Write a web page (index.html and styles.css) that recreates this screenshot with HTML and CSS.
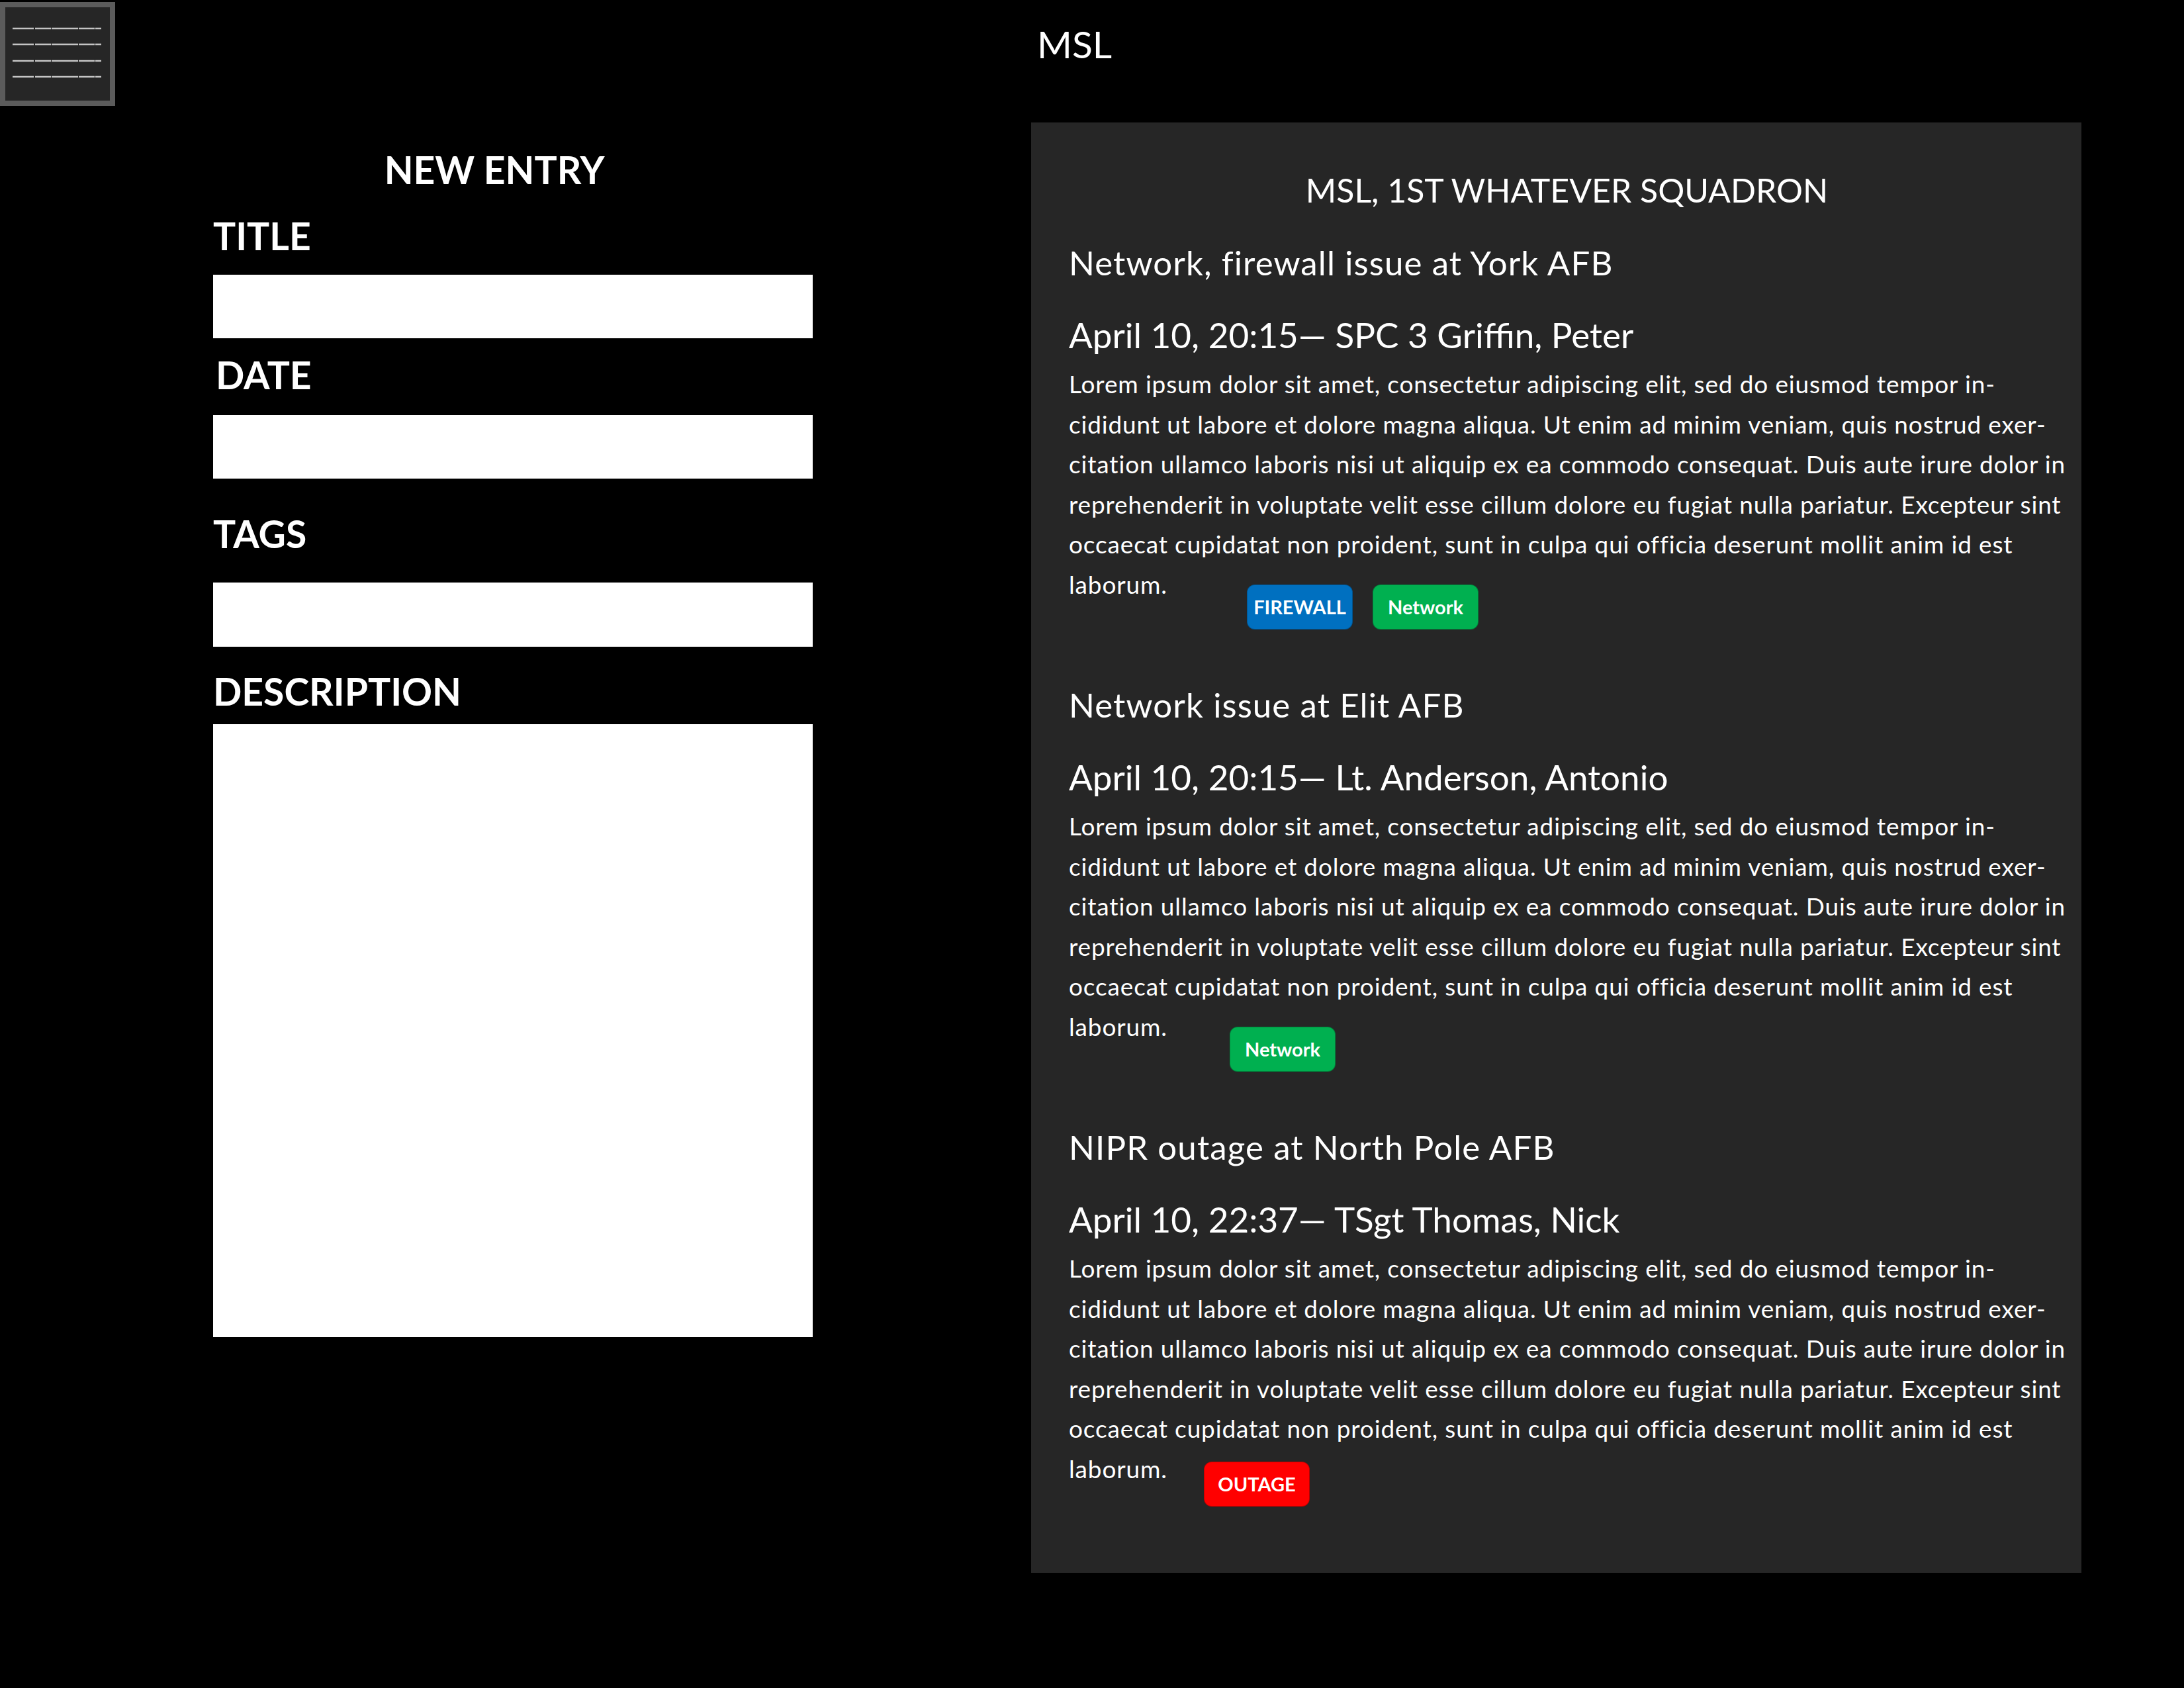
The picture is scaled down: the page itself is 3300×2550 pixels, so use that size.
FILE: index.html
```html
<!DOCTYPE html>
<html lang="en">
<head>
<meta charset="utf-8">
<title>MSL</title>
<link rel="stylesheet" href="styles.css">
</head>
<body>
<header class="topbar">
  <button class="menu-btn" type="button" aria-label="Menu">
    <svg class="menu-icon" width="158" height="141" viewBox="0 0 158 141">
      <g stroke="#c4c4c4" stroke-width="2.5" fill="none" stroke-dasharray="32 2 24 1 40 1 24 1 9 40">
        <path d="M11 32H145"/>
        <path d="M11 56H145"/>
        <path d="M11 81H145"/>
        <path d="M11 105H145"/>
      </g>
    </svg>
  </button>
  <h1 class="app-title">MSL</h1>
</header>

<main class="workspace">
  <section class="entry-form">
    <h2 class="form-heading">NEW ENTRY</h2>
    <label class="field-label label-title" for="f-title">TITLE</label>
    <input class="field-input input-title" id="f-title" type="text">
    <label class="field-label label-date" for="f-date">DATE</label>
    <input class="field-input input-date" id="f-date" type="text">
    <label class="field-label label-tags" for="f-tags">TAGS</label>
    <input class="field-input input-tags" id="f-tags" type="text">
    <label class="field-label label-desc" for="f-desc">DESCRIPTION</label>
    <textarea class="field-area" id="f-desc"></textarea>
  </section>

  <section class="log-panel">
    <h2 class="panel-heading">MSL, 1ST WHATEVER SQUADRON</h2>

    <article class="entry">
      <h3 class="entry-title">Network, firewall issue at York AFB</h3>
      <p class="entry-meta">April 10, 20:15— SPC 3 Griffin, Peter</p>
      <p class="entry-body">Lorem ipsum dolor sit amet, consectetur adipiscing elit, sed do eiusmod tempor in-<br>cididunt ut labore et dolore magna aliqua. Ut enim ad minim veniam, quis nostrud exer-<br>citation ullamco laboris nisi ut aliquip ex ea commodo consequat. Duis aute irure dolor in<br>reprehenderit in voluptate velit esse cillum dolore eu fugiat nulla pariatur. Excepteur sint<br>occaecat cupidatat non proident, sunt in culpa qui officia deserunt mollit anim id est</p>
      <div class="entry-last">
        <span class="last-word">laborum.</span>
        <div class="tag-list tags-one">
          <span class="tag tag-blue">FIREWALL</span>
          <span class="tag tag-green">Network</span>
        </div>
      </div>
    </article>

    <article class="entry">
      <h3 class="entry-title">Network issue at Elit AFB</h3>
      <p class="entry-meta">April 10, 20:15— Lt. Anderson, Antonio</p>
      <p class="entry-body">Lorem ipsum dolor sit amet, consectetur adipiscing elit, sed do eiusmod tempor in-<br>cididunt ut labore et dolore magna aliqua. Ut enim ad minim veniam, quis nostrud exer-<br>citation ullamco laboris nisi ut aliquip ex ea commodo consequat. Duis aute irure dolor in<br>reprehenderit in voluptate velit esse cillum dolore eu fugiat nulla pariatur. Excepteur sint<br>occaecat cupidatat non proident, sunt in culpa qui officia deserunt mollit anim id est</p>
      <div class="entry-last">
        <span class="last-word">laborum.</span>
        <div class="tag-list tags-two">
          <span class="tag tag-green">Network</span>
        </div>
      </div>
    </article>

    <article class="entry">
      <h3 class="entry-title">NIPR outage at North Pole AFB</h3>
      <p class="entry-meta">April 10, 22:37— TSgt Thomas, Nick</p>
      <p class="entry-body">Lorem ipsum dolor sit amet, consectetur adipiscing elit, sed do eiusmod tempor in-<br>cididunt ut labore et dolore magna aliqua. Ut enim ad minim veniam, quis nostrud exer-<br>citation ullamco laboris nisi ut aliquip ex ea commodo consequat. Duis aute irure dolor in<br>reprehenderit in voluptate velit esse cillum dolore eu fugiat nulla pariatur. Excepteur sint<br>occaecat cupidatat non proident, sunt in culpa qui officia deserunt mollit anim id est</p>
      <div class="entry-last">
        <span class="last-word">laborum.</span>
        <div class="tag-list tags-three">
          <span class="tag tag-red">OUTAGE</span>
        </div>
      </div>
    </article>
  </section>
</main>
</body>
</html>
```

FILE: styles.css
```css
* { box-sizing: border-box; }

html, body {
  margin: 0;
  padding: 0;
  background: #000;
}

body {
  width: 3300px;
  height: 2550px;
  overflow: hidden;
  color: #fff;
  font-family: Lato, "Open Sans", "Liberation Sans", sans-serif;
}

/* ---------- top bar ---------- */
.topbar {
  display: flex;
  align-items: flex-start;
  height: 185px;
}

.menu-btn {
  display: block;
  margin: 3px 0 0 0;
  padding: 0;
  width: 174px;
  height: 157px;
  border: 8px solid #5b5b5b;
  background: #262626;
}

.menu-icon { display: block; }

.app-title {
  margin: 26px 0 0 1393px;
  font-size: 57px;
  font-weight: 400;
  line-height: 80px;
}

/* ---------- layout ---------- */
.workspace {
  display: flex;
  align-items: flex-start;
  gap: 330px;
  padding-left: 322px;
}

/* ---------- new entry form ---------- */
.entry-form {
  width: 906px;
  padding-top: 31px;
  display: flex;
  flex-direction: column;
  align-items: stretch;
}

.form-heading {
  margin: 0;
  padding-right: 56px;
  text-align: center;
  font-size: 57px;
  font-weight: 700;
  line-height: 80px;
}

.field-label {
  display: block;
  font-size: 57px;
  font-weight: 700;
  line-height: 80px;
}

.label-title { margin-top: 20px; }
.label-date { margin-top: 15px; padding-left: 4px; }
.label-tags { margin-top: 43px; }
.label-desc { margin-top: 27px; padding-left: 0; }

.field-input,
.field-area {
  display: block;
  width: 906px;
  margin: 0;
  padding: 0 16px;
  border: none;
  background: #fff;
  font-family: inherit;
  font-size: 40px;
  color: #000;
}

.input-title { margin-top: 19px; height: 96px; }
.input-date { margin-top: 21px; height: 96px; }
.input-tags { margin-top: 34px; height: 97px; }

.field-area {
  margin-top: 10px;
  height: 926px;
  resize: none;
}

/* ---------- log panel ---------- */
.log-panel {
  width: 1587px;
  height: 2191px;
  padding: 67px 25px 0 57px;
  background: #262626;
}

.panel-heading {
  margin: 0;
  text-align: center;
  font-size: 50px;
  font-weight: 400;
  line-height: 70px;
}

.entry { margin-top: 40px; }
.entry + .entry { margin-top: 79px; }

.entry-title {
  margin: 0;
  font-size: 51px;
  font-weight: 400;
  letter-spacing: 1.1px;
  line-height: 70px;
  white-space: nowrap;
}

.entry-meta {
  margin: 39px 0 0 0;
  font-size: 53px;
  line-height: 70px;
  white-space: nowrap;
}

.entry-body {
  margin: 9px 0 0 0;
  font-size: 37px;
  letter-spacing: 0.85px;
  line-height: 60.6px;
  white-space: nowrap;
}

.entry-last {
  display: flex;
  align-items: flex-start;
  font-size: 37px;
  letter-spacing: 0.85px;
  line-height: 60.6px;
}

.last-word { width: 269px; flex: none; }

.tag-list {
  display: flex;
  gap: 30px;
  margin-top: 30px;
  letter-spacing: 0;
}

.tags-two { margin-left: -26px; }
.tags-three { margin-left: -65px; margin-top: 19px; }

.tag {
  display: flex;
  align-items: center;
  justify-content: center;
  width: 160px;
  height: 68px;
  border-radius: 12px;
  border: 1px solid rgba(0, 0, 0, 0.25);
  font-size: 29px;
  font-weight: 700;
  line-height: 1;
  color: #fff;
}

.tag-blue { background: #0070c0; }
.tag-green { background: #00b050; }
.tag-red { background: #ff0000; }
```
